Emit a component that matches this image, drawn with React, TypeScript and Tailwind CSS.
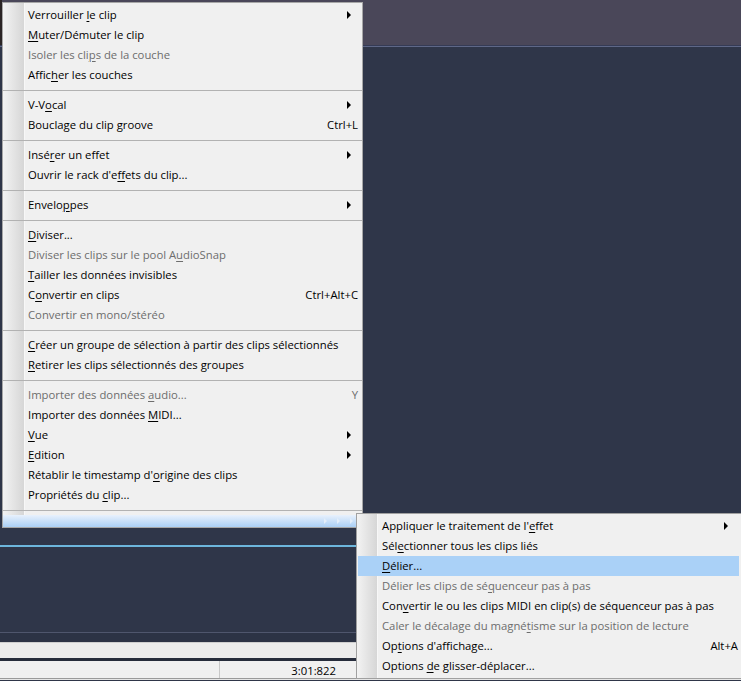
import React from 'react';

type Item =
  | { sep: true }
  | {
      sep?: false;
      label: React.ReactNode;
      disabled?: boolean;
      sub?: boolean;
      shortcut?: string;
      active?: boolean;
    };

const u = (before: string, ch: string, after: string) => (
  <>
    {before}
    <u className="underline underline-offset-2">{ch}</u>
    {after}
  </>
);

const mainItems: Item[] = [
  { label: u('Verrouiller ', 'l', 'e clip'), sub: true },
  { label: u('', 'M', 'uter/Démuter le clip') },
  { label: u('Isoler les cli', 'p', 's de la couche'), disabled: true },
  { label: u('Affic', 'h', 'er les couches') },
  { sep: true },
  { label: u('V-V', 'o', 'cal'), sub: true },
  { label: u('Bouclage du clip ', 'g', 'roove'), shortcut: 'Ctrl+L' },
  { sep: true },
  { label: u('Insé', 'r', 'er un effet'), sub: true },
  { label: u("Ouvrir le rack d'e", 'f', 'fets du clip...') },
  { sep: true },
  { label: u('Envelo', 'p', 'pes'), sub: true },
  { sep: true },
  { label: u('', 'D', 'iviser...') },
  { label: u('Diviser les clips sur le pool A', 'u', 'dioSnap'), disabled: true },
  { label: u('', 'T', 'ailler les données invisibles') },
  { label: u('C', 'o', 'nvertir en clips'), shortcut: 'Ctrl+Alt+C' },
  { label: 'Convertir en mono/stéréo', disabled: true },
  { sep: true },
  { label: u('', 'C', 'réer un groupe de sélection à partir des clips sélectionnés') },
  { label: u('', 'R', 'etirer les clips sélectionnés des groupes') },
  { sep: true },
  { label: u('Importer des données ', 'a', 'udio...'), disabled: true, shortcut: 'Y' },
  { label: u('Importer des données ', 'M', 'IDI...') },
  { label: u('', 'V', 'ue'), sub: true },
  { label: u('', 'E', 'dition'), sub: true },
  { label: u("Rétablir le timestamp d'", 'o', 'rigine des clips') },
  { label: u('Propriétés du ', 'c', 'lip...') },
  { sep: true },
];

const subItems: Item[] = [
  { label: u("Appliquer le traitement de l'", 'e', 'ffet'), sub: true },
  { label: u('Sél', 'e', 'ctionner tous les clips liés') },
  { label: u('', 'D', 'élier...'), active: true },
  { label: u('Délier les clips de sé', 'q', 'uenceur pas à pas'), disabled: true },
  { label: u('Con', 'v', 'ertir le ou les clips MIDI en clip(s) de séquenceur pas à pas') },
  { label: u('Caler le décalage du magné', 't', 'isme sur la position de lecture'), disabled: true },
  { label: u('Op', 't', "ions d'affichage..."), shortcut: 'Alt+A' },
  { label: u('Options ', 'd', 'e glisser-déplacer...') },
];

const Arrow = () => (
  <span className="w-0 h-0 border-y-[4px] border-y-transparent border-l-[4px] border-l-black" />
);

const MenuRows: React.FC<{ items: Item[]; textLeft: string; right: string }> = ({ items, textLeft, right }) => (
  <>
    {items.map((it, i) =>
      it.sep ? (
        <div key={i} className="h-[10px] flex items-center">
          <div className="h-px w-full bg-[#b2b2b2]" />
        </div>
      ) : (
        <div
          key={i}
          className={`relative h-[20px] flex items-center ${textLeft} ${right} ${
            it.active ? 'bg-[#aad1f7]' : ''
          } ${it.disabled ? 'text-[#6d6d6d]' : 'text-black'}`}
        >
          <span className="flex-1 whitespace-nowrap">{it.label}</span>
          {it.shortcut && <span className="whitespace-nowrap">{it.shortcut}</span>}
          {it.sub && (
            <span className="absolute right-[11px] top-[6px] flex">
              <Arrow />
            </span>
          )}
        </div>
      )
    )}
  </>
);

export default function App() {
  return (
    <div
      className="relative w-[741px] h-[681px] overflow-hidden bg-[#2f3649]"
      style={{ fontFamily: '"Open Sans", "Noto Sans", sans-serif' }}
    >
      {/* background app */}
      <div className="flex h-[45px]">
        <div className="w-[2px] bg-[#2b2526]" />
        <div className="flex-1 bg-[#4a4759]" />
      </div>
      <div className="h-px bg-[#353b55]" />
      <div className="h-px bg-[#5e6787]" />
      <div className="h-[498px] bg-[#2f3649]" />
      <div className="h-[2px] bg-[#6db6dc]" />
      <div className="h-[85px] bg-[#2f3649]" />
      <div className="h-px bg-[#4f566d]" />
      <div className="h-[9px] bg-[#2c3345]" />
      <div className="h-[16px] bg-[#ececec] border-t border-[#cfcfcf]" />
      <div className="h-[3px] bg-[#262c3b]" />
      <div className="h-[17px] bg-[#f0f0f0] flex text-[11.3px] text-black">
        <div className="w-[220px] border-r border-[#c8c8c8]" />
        <div className="w-[116px] text-right leading-[17px] pt-[1px]">3:01:822</div>
      </div>
      <div className="h-px bg-[#9a9a9a]" />
      <div className="h-[1px] bg-[#e6e6e6]" />

      {/* main context menu */}
      <div className="absolute left-[2px] top-[2px] w-[361px] bg-[#f0f0f0] border border-[#a7a7a7] text-[11.3px]">
        <div className="relative pt-[2px]">
          <div className="absolute left-0 top-0 bottom-0 w-[22px] bg-gradient-to-r from-[#f3f3f3] to-[#d6d6d6] border-r border-[#f7f7f7]" />
          <div className="relative">
            <MenuRows items={mainItems} textLeft="pl-[25px]" right="pr-[4px]" />
          </div>
        </div>
        <div className="relative h-[12px] bg-gradient-to-b from-[#e8f1fc] to-[#abd0f6] flex items-center justify-end gap-[10px] pr-[9px]">
          <span className="w-0 h-0 border-y-[3px] border-y-transparent border-l-[3px] border-l-[#e4eefa]" />
          <span className="w-0 h-0 border-y-[3px] border-y-transparent border-l-[3px] border-l-[#e4eefa]" />
          <span className="w-0 h-0 border-y-[3px] border-y-transparent border-l-[3px] border-l-[#e4eefa]" />
        </div>
      </div>

      {/* submenu */}
      <div className="absolute left-[356px] top-[513px] w-[386px] bg-[#f0f0f0] border border-[#a0a0a0] text-[11.3px] py-[2px]">
        <div className="absolute left-0 top-0 bottom-0 w-[21px] bg-gradient-to-r from-[#f3f3f3] to-[#d6d6d6] border-r border-[#f7f7f7]" />
        <div className="relative pl-[1px] pr-[2px]">
          <MenuRows items={subItems} textLeft="pl-[24px]" right="pr-[1px]" />
        </div>
      </div>
    </div>
  );
}
